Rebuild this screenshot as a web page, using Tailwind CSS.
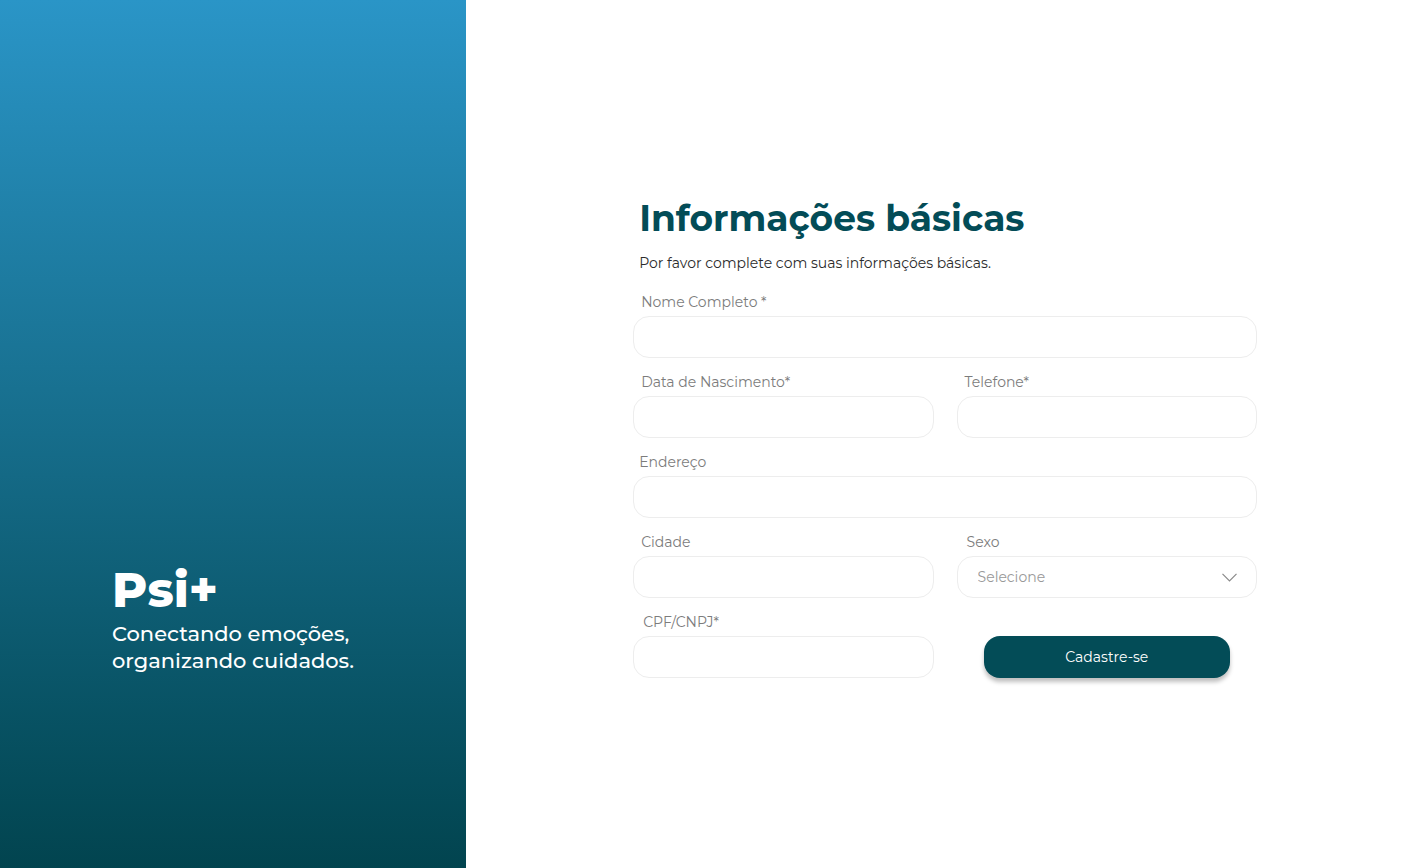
<!DOCTYPE html>
<html lang="pt-BR">
<head>
<meta charset="utf-8">
<meta name="viewport" content="width=device-width, initial-scale=1">
<title>Psi+ | Informações básicas</title>
<script src="https://cdn.jsdelivr.net/npm/@tailwindcss/browser@4"></script>
</head>
<body class="flex min-h-screen bg-white font-[Montserrat,Inter,sans-serif] text-sm">
  <aside class="flex w-[33.2%] shrink-0 flex-col justify-end bg-linear-to-b from-[#2a95c7] via-[#166d8b] to-[#02444f] pb-[194px] pl-28 text-white">
    <p class="text-5xl leading-[60px] font-extrabold">Psi+</p>
    <p class="text-[21px] leading-[27px] font-medium">Conectando emoções,<br>organizando cuidados.</p>
  </aside>
  <main class="flex flex-1 flex-col justify-center pt-1 pr-[147px] pl-[167px]">
    <h1 class="pl-1.5 text-4xl leading-[46px] font-bold text-[#034c57]">Informações básicas</h1>
    <p class="mt-3 pl-1.5 leading-5 text-[#2b2b2b]">Por favor complete com suas informações básicas.</p>
    <form class="mt-[19px] grid grid-cols-2 gap-x-[23px] gap-y-3.5 text-[#7c7c7c]">
      <div class="col-span-2 flex flex-col gap-1">
        <label for="nome" class="pl-2 leading-5">Nome Completo *</label>
        <input id="nome" type="text" required class="h-[42px] w-full rounded-2xl border border-[#ededed] bg-white px-5">
      </div>
      <div class="flex flex-col gap-1">
        <label for="nascimento" class="pl-2 leading-5">Data de Nascimento*</label>
        <input id="nascimento" type="text" required class="h-[42px] w-full rounded-2xl border border-[#ededed] bg-white px-5">
      </div>
      <div class="flex flex-col gap-1">
        <label for="telefone" class="pl-2 leading-5">Telefone*</label>
        <input id="telefone" type="tel" required class="h-[42px] w-full rounded-2xl border border-[#ededed] bg-white px-5">
      </div>
      <div class="col-span-2 flex flex-col gap-1">
        <label for="endereco" class="pl-1.5 leading-5">Endereço</label>
        <input id="endereco" type="text" class="h-[42px] w-full rounded-2xl border border-[#ededed] bg-white px-5">
      </div>
      <div class="flex flex-col gap-1">
        <label for="cidade" class="pl-2 leading-5">Cidade</label>
        <input id="cidade" type="text" class="h-[42px] w-full rounded-2xl border border-[#ededed] bg-white px-5">
      </div>
      <div class="flex flex-col gap-1">
        <label for="sexo" class="pl-2.5 leading-5">Sexo</label>
        <div class="relative">
          <select id="sexo" class="h-[42px] w-full appearance-none rounded-2xl border border-[#ededed] bg-white px-5 text-[#999999]">
            <option>Selecione</option>
            <option>Feminino</option>
            <option>Masculino</option>
          </select>
          <svg class="pointer-events-none absolute top-4 right-5 h-2.5 w-4" viewBox="0 0 16 10" fill="none" stroke="#8a8a8a" stroke-width="1.2" aria-hidden="true"><path d="M1.5 1.8l7 7 7-7"/></svg>
        </div>
      </div>
      <div class="flex flex-col gap-1">
        <label for="cpf" class="pl-2.5 leading-5">CPF/CNPJ*</label>
        <input id="cpf" type="text" required class="h-[42px] w-full rounded-2xl border border-[#ededed] bg-white px-5">
      </div>
      <div class="flex flex-col justify-end px-[27px]">
        <button type="submit" class="h-[42px] w-full rounded-2xl bg-[#034c57] text-white shadow-[0_4px_4px_rgba(0,0,0,0.25)]">Cadastre-se</button>
      </div>
    </form>
  </main>
</body>
</html>
